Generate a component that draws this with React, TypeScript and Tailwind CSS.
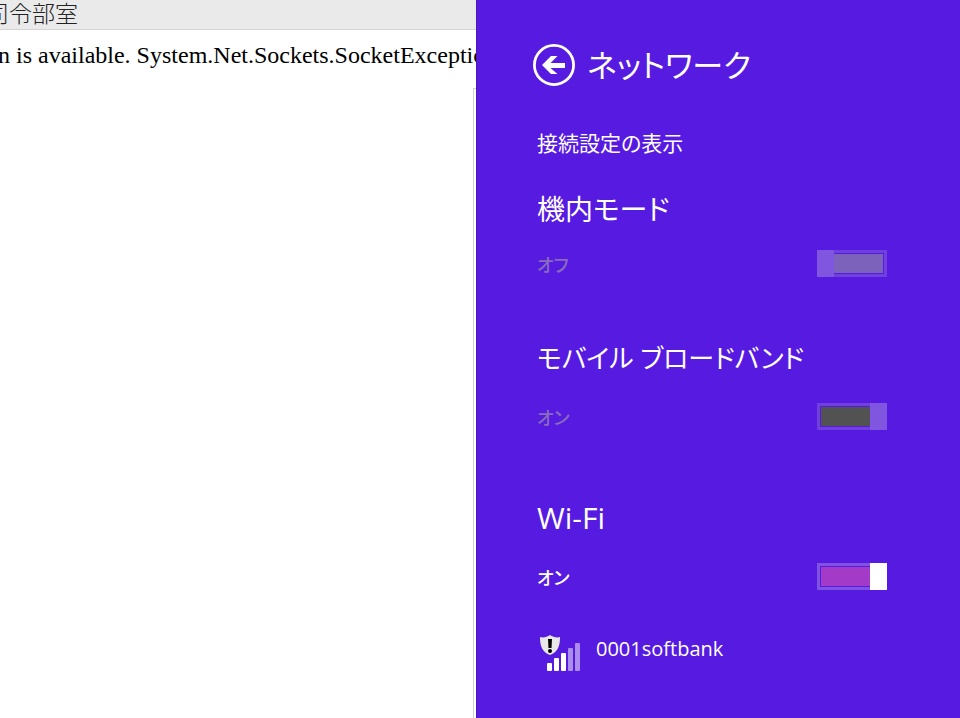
import React from "react";

type SwitchProps = {
  id: string;
  on: boolean;
  disabled?: boolean;
  frame: string;
  fill: string;
  thumb: string;
};

function Switch({ id, on, disabled, frame, fill, thumb }: SwitchProps) {
  return (
    <span className={`relative flex h-[27px] w-[70px] ${on ? "" : "flex-row-reverse"}`}>
      <input
        id={id}
        type="checkbox"
        role="switch"
        defaultChecked={on}
        disabled={disabled}
        className="absolute inset-0 h-full w-full opacity-0"
      />
      <span
        className={`flex grow border-y-[3px] py-px ${on ? "border-l-[3px] pl-px" : "border-r-[3px] pr-px"} ${frame}`}
      >
        <span className={`grow ${fill}`} />
      </span>
      <span className={`w-[17px] ${thumb}`} />
    </span>
  );
}

type SettingProps = SwitchProps & { title: string; state: string; size: string; gap: string };

function Setting({ title, state, size, gap, ...control }: SettingProps) {
  return (
    <section>
      <h2 className={`leading-10 ${size}`}>{title}</h2>
      <div className={`flex h-7 items-center justify-between ${gap}`}>
        <label
          htmlFor={control.id}
          className={`pt-1 text-[18px] leading-6 font-medium ${control.disabled ? "text-[#8a6cbc]" : "text-white"}`}
        >
          {state}
        </label>
        <Switch {...control} />
      </div>
    </section>
  );
}

function BackIcon() {
  return (
    <svg viewBox="0 0 42 42" className="h-[42px] w-[42px]" fill="none" aria-hidden="true">
      <circle cx="21" cy="21" r="19.6" stroke="white" strokeWidth="2.8" />
      <path d="M9 21L18 12H24.5L17.5 19H32V24H17.5L24.5 30H18Z" fill="white" />
    </svg>
  );
}

function SignalIcon() {
  return (
    <svg viewBox="0 0 41 37" className="h-[37px] w-[41px]" aria-hidden="true">
      <g fill="white">
        <rect x="7" y="28" width="5" height="8" rx="1" />
        <rect x="14" y="23" width="5" height="13" rx="1" />
        <rect x="21" y="18" width="5" height="18" rx="1" />
        <rect x="28" y="13" width="5" height="23" rx="1" opacity="0.5" />
        <rect x="35" y="8" width="5" height="28" rx="1" opacity="0.5" />
      </g>
      <path
        d="M10 0C7 2 3 3 0 2C0 11 2 17 10 20C18 17 20 11 20 2C17 3 13 2 10 0Z"
        fill="#e8e8e8"
      />
      <path d="M8 4H12L11.5 13H8.5Z" fill="black" />
      <circle cx="10" cy="16" r="2" fill="black" />
    </svg>
  );
}

export default function App() {
  return (
    <div className="flex h-screen min-h-[700px] overflow-hidden bg-white">
      <main className="flex min-w-0 flex-1 flex-col overflow-hidden">
        <header className="h-[30px] shrink-0 border-b border-[#d4d4d4] bg-[#eaeaea]">
          <p className="-ml-[14px] font-['Noto_Sans_CJK_JP',sans-serif] text-[23px] leading-6 font-light whitespace-nowrap text-[#222222]">
            司令部室
          </p>
        </header>
        <p className="-ml-[2px] h-[58px] shrink-0 pt-[11px] font-['Liberation_Serif',serif] text-[24px] leading-7 whitespace-nowrap text-black">
          n is available. System.Net.Sockets.SocketException
        </p>
        <div className="w-[3px] grow self-end border-t border-l border-[#d0d0d0]" />
      </main>

      <aside className="w-[484px] shrink-0 border-l border-[#4a18c0] bg-[#561ae1] pr-[73px] pl-[60px] font-['Open_Sans','Noto_Sans_CJK_JP',sans-serif] text-white [font-feature-settings:'palt']">
        <div className="mt-[41px] -ml-1 flex h-12 items-center gap-3">
          <button type="button" aria-label="戻る">
            <BackIcon />
          </button>
          <h1 className="text-[31px] leading-[48px]">ネットワーク</h1>
        </div>
        <a href="#settings" className="mt-10 block text-[21px] leading-7">
          接続設定の表示
        </a>

        <div className="mt-8">
          <Setting
            id="airplane"
            title="機内モード"
            state="オフ"
            size="text-[28px]"
            gap="mt-5"
            on={false}
            disabled
            frame="border-[#6f40dc]"
            fill="bg-[#7c62ba]"
            thumb="bg-[#8055e0]"
          />
        </div>
        <div className="mt-[61px]">
          <Setting
            id="broadband"
            title="モバイル ブロードバンド"
            state="オン"
            size="text-[26px]"
            gap="mt-6"
            on
            disabled
            frame="border-[#6f40dc]"
            fill="bg-[#525252]"
            thumb="bg-[#8055e0]"
          />
        </div>
        <div className="mt-[68px]">
          <Setting
            id="wifi"
            title="Wi-Fi"
            state="オン"
            size="text-[30px]"
            gap="mt-6"
            on
            frame="border-[#8052e2]"
            fill="bg-[#a33bc8]"
            thumb="bg-white"
          />
        </div>

        <button type="button" className="mt-[45px] ml-[3px] flex gap-[15px] text-left">
          <SignalIcon />
          <span className="text-[20px] leading-7">0001softbank</span>
        </button>
      </aside>
    </div>
  );
}
